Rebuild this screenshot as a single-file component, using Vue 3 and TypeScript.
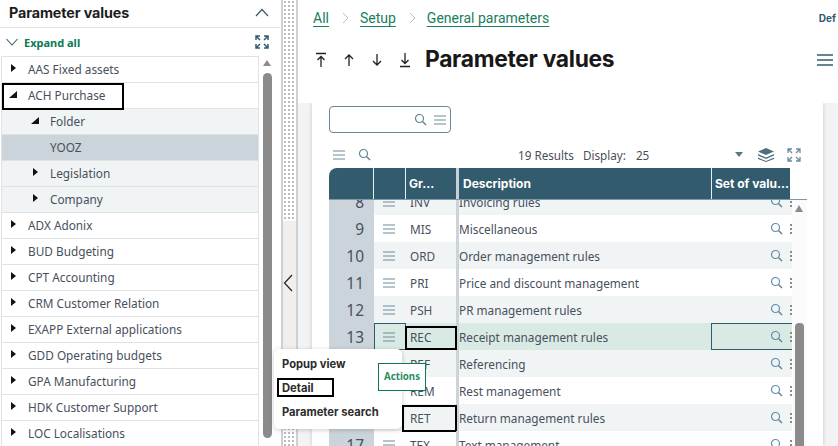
<script setup lang="ts">
const treeTop = ['AAS Fixed assets']
const treeBottom = [
  'ADX Adonix',
  'BUD Budgeting',
  'CPT Accounting',
  'CRM Customer Relation',
  'EXAPP External applications',
  'GDD Operating budgets',
  'GPA Manufacturing',
  'HDK Customer Support',
  'LOC Localisations',
]

const rows = [
  { n: 8, code: 'INV', desc: 'Invoicing rules' },
  { n: 9, code: 'MIS', desc: 'Miscellaneous' },
  { n: 10, code: 'ORD', desc: 'Order management rules' },
  { n: 11, code: 'PRI', desc: 'Price and discount management' },
  { n: 12, code: 'PSH', desc: 'PR management rules' },
  { n: 13, code: 'REC', desc: 'Receipt management rules' },
  { n: 14, code: 'REF', desc: 'Referencing' },
  { n: 15, code: 'REM', desc: 'Rest management' },
  { n: 16, code: 'RET', desc: 'Return management rules' },
  { n: 17, code: 'TEX', desc: 'Text management' },
]
</script>

<template>
  <div class="page">
    <aside class="left">
      <div class="left-title">
        <span>Parameter values</span>
        <svg width="14" height="9" viewBox="0 0 14 9"><path d="M1 8l6-6.500L13 8" fill="none" stroke="#335b6e" stroke-width="1.200" /></svg>
      </div>
      <div class="expand">
        <svg width="12" height="8" viewBox="0 0 12 8"><path d="M.5 1L6 7l5.500-6" fill="none" stroke="#335b6e" stroke-width="1.100" /></svg>
        <span>Expand all</span>
        <svg class="expand-full" width="14" height="14" viewBox="0 0 14 14"><path d="M1 5V1h4M9 1h4v4M1 9v4h4M13 9v4H9M1 1l4 4M13 1L9 5M1 13l4-4M13 13l-4-4" fill="none" stroke="#335b6e" stroke-width="1.500" /></svg>
      </div>
      <div class="tree-wrap">
        <div class="tree">
          <div v-for="t in treeTop" :key="t" class="node"><i class="closed"></i>{{ t }}</div>
          <div class="node boxed"><i class="open"></i>ACH Purchase</div>
          <div class="node sub"><i class="open"></i>Folder</div>
          <div class="node sub selected"><i class="none"></i>YOOZ</div>
          <div class="node sub"><i class="closed"></i>Legislation</div>
          <div class="node sub"><i class="closed"></i>Company</div>
          <div v-for="t in treeBottom" :key="t" class="node"><i class="closed"></i>{{ t }}</div>
        </div>
        <div class="left-scroll">
          <b class="arrow-up"></b>
          <b class="thumb"></b>
        </div>
      </div>
    </aside>

    <div class="divider">
      <div class="dots"></div>
      <div class="collapse">
        <svg width="10" height="18" viewBox="0 0 10 18"><path d="M9 1L1.500 9 9 17" fill="none" stroke="#222" stroke-width="1.200" /></svg>
      </div>
      <div class="dots"></div>
    </div>

    <main class="main">
      <header class="crumbs">
        <a>All</a>
        <svg class="gt" width="7" height="12" viewBox="0 0 7 12"><path d="M1 1l5 5-5 5" fill="none" stroke="#bdbdbd" stroke-width="1" /></svg>
        <a>Setup</a>
        <svg class="gt" width="7" height="12" viewBox="0 0 7 12"><path d="M1 1l5 5-5 5" fill="none" stroke="#bdbdbd" stroke-width="1" /></svg>
        <a>General parameters</a>
        <span class="def">Def</span>
      </header>
      <div class="heading">
        <div class="nav-icons">
          <svg width="14" height="16" viewBox="0 0 14 16"><path d="M2 1.500h10M7 15V4.500M3.500 8L7 4.500 10.500 8" fill="none" stroke="#222" stroke-width="1.300" /></svg>
          <svg width="14" height="16" viewBox="0 0 14 16"><path d="M7 14V3M3 7l4-4 4 4" fill="none" stroke="#222" stroke-width="1.300" /></svg>
          <svg width="14" height="16" viewBox="0 0 14 16"><path d="M7 2v11M3 9l4 4 4-4" fill="none" stroke="#222" stroke-width="1.300" /></svg>
          <svg width="14" height="16" viewBox="0 0 14 16"><path d="M7 1v10.500M3.500 8L7 11.500 10.500 8M2 14.500h10" fill="none" stroke="#222" stroke-width="1.300" /></svg>
        </div>
        <h1>Parameter values</h1>
        <svg class="burger-big" width="16" height="12" viewBox="0 0 16 12"><path d="M0 1h16M0 6h16M0 11h16" stroke="#335b6e" stroke-width="1.300" /></svg>
      </div>

      <section class="band">
        <div class="card">
          <div class="search-box">
            <svg width="13" height="13" viewBox="0 0 13 13"><circle cx="5.500" cy="5.500" r="4" fill="none" stroke="#5f8299" stroke-width="1.200" /><path d="M8.500 8.500L12 12" stroke="#5f8299" stroke-width="1.400" /></svg>
            <svg width="12" height="10" viewBox="0 0 12 10"><path d="M0 1h12M0 5h12M0 9h12" stroke="#6f8a9b" stroke-width="1.100" /></svg>
          </div>
          <div class="toolbar">
            <svg width="12" height="10" viewBox="0 0 12 10"><path d="M0 1h12M0 5h12M0 9h12" stroke="#6f8a9b" stroke-width="1.100" /></svg>
            <svg class="tool-search" width="13" height="13" viewBox="0 0 13 13"><circle cx="5.500" cy="5.500" r="4" fill="none" stroke="#5f8299" stroke-width="1.200" /><path d="M8.500 8.500L12 12" stroke="#5f8299" stroke-width="1.400" /></svg>
            <span class="results">19 Results</span>
            <span class="display">Display:</span>
            <span class="count">25</span>
            <i class="caret"></i>
            <svg class="layers" width="16" height="14" viewBox="0 0 16 14"><path d="M8 0l8 3.500-8 3.500-8-3.500zM0 6l8 3.500L16 6v1.500L8 11 0 7.500zM0 9.500L8 13l8-3.500V11l-8 3-8-3z" fill="#4f6f80" /></svg>
            <svg class="full" width="14" height="14" viewBox="0 0 14 14"><path d="M1 5V1h4M9 1h4v4M1 9v4h4M13 9v4H9M1 1l4 4M13 1L9 5M1 13l4-4M13 13l-4-4" fill="none" stroke="#6f8a9b" stroke-width="1.300" /></svg>
          </div>

          <div class="table">
            <div class="thead">
              <div class="th c-num"></div>
              <div class="th c-act"></div>
              <div class="th c-code">Gr...</div>
              <div class="th c-desc">Description</div>
              <div class="th c-set">Set of valu...</div>
            </div>
            <div class="tbody">
              <div class="rows">
                <div
                  v-for="(r, i) in rows"
                  :key="r.n"
                  class="row"
                  :class="{ odd: i % 2 === 0, active: r.n === 13 }"
                >
                  <div class="td c-num">{{ r.n }}</div>
                  <div class="td c-act">
                    <svg width="12" height="10" viewBox="0 0 12 10"><path d="M0 1h12M0 5h12M0 9h12" stroke="#6f8a9b" stroke-width="1.100" /></svg>
                  </div>
                  <div class="td c-code" :class="{ 'mark-rec': r.n === 13, 'mark-ret': r.n === 16 }">{{ r.code }}</div>
                  <div class="td c-desc">{{ r.desc }}</div>
                  <div class="td c-set">
                    <svg width="13" height="13" viewBox="0 0 13 13"><circle cx="5.500" cy="5.500" r="4" fill="none" stroke="#5f8fad" stroke-width="1.200" /><path d="M8.500 8.500L12 12" stroke="#5f7f93" stroke-width="1.400" /></svg>
                    <span class="kebab"></span>
                  </div>
                </div>
              </div>
              <div class="table-scroll">
                <b class="t-arrow"></b>
                <b class="t-thumb"></b>
              </div>
            </div>
          </div>
        </div>
      </section>
    </main>

    <div class="menu">
      <div class="menu-item">Popup view</div>
      <div class="menu-item detail">Detail</div>
      <div class="menu-item">Parameter search</div>
    </div>
    <div class="actions">Actions</div>
  </div>
</template>

<style scoped>
.page {
  position: relative;
  display: flex;
  width: 838px;
  height: 446px;
  overflow: hidden;
  background: #fff;
  font-family: "Noto Sans", "Open Sans", sans-serif;
  color: #3f4a55;
}

.left {
  width: 280px;
  flex: none;
  height: 446px;
  overflow: hidden;
}
.left-title {
  height: 24px;
  padding: 0 11px 3px 9px;
  display: flex;
  align-items: center;
  justify-content: space-between;
  border-bottom: 1px solid #dfe3e6;
  font: 700 14.300px "Inter", sans-serif;
  color: #1c1c1c;
  letter-spacing: -0.100px;
}
.expand {
  height: 28px;
  display: flex;
  align-items: center;
  padding: 0 11px 0 6px;
  font: 700 11px "Noto Sans", sans-serif;
  color: #0a7a50;
}
.expand span {
  margin-left: 6px;
}
.expand-full {
  margin-left: auto;
}
.tree-wrap {
  display: flex;
}
.tree {
  width: 258px;
  margin-left: 1px;
  border: 1px solid #dfe3e6;
  border-width: 1px 1px 0 1px;
  flex: none;
  box-sizing: border-box;
}
.node {
  height: 24px;
  padding-bottom: 1px;
  border-bottom: 1px solid #dfe3e6;
  display: flex;
  align-items: center;
  font-size: 11.800px;
  color: #48505c;
  padding-left: 9px;
}
.node i {
  display: block;
  width: 17px;
  flex: none;
  margin-top: -2px;
}
.node .closed::before {
  content: "";
  display: block;
  width: 0;
  height: 0;
  border-left: 5px solid #111;
  border-top: 4.500px solid transparent;
  border-bottom: 4.500px solid transparent;
}
.node .open::before {
  content: "";
  display: block;
  width: 0;
  height: 0;
  margin-left: -2px;
  border-bottom: 7px solid #111;
  border-left: 8px solid transparent;
}
.sub {
  background: #f0f4f5;
  padding-left: 31px;
}
.selected {
  background: #cbd4da;
}
.boxed {
  position: relative;
}
.boxed::after {
  content: "";
  position: absolute;
  left: 0;
  top: 0;
  width: 122px;
  height: 27px;
  box-sizing: border-box;
  border: 2px solid #000;
}
.left-scroll {
  margin-left: 4px;
  width: 9px;
}
.arrow-up {
  display: block;
  margin-top: 4px;
  width: 0;
  height: 0;
  border-left: 4.500px solid transparent;
  border-right: 4.500px solid transparent;
  border-bottom: 6px solid #8b8b8b;
}
.thumb {
  display: block;
  margin-top: 7px;
  width: 9px;
  height: 365px;
  border-radius: 5px;
  background: #8b8b8b;
}

.divider {
  width: 17px;
  flex: none;
  height: 446px;
  margin-left: 1px;
  background: #f1efee;
  border-left: 2px solid #d0d0d0;
  border-right: 2px solid #d0d0d0;
  box-sizing: border-box;
  display: flex;
  flex-direction: column;
}
.dots {
  flex: none;
  height: 221px;
  background-color: #fff;
  background-image: radial-gradient(#bcbcbc 1px, transparent 1.200px);
  background-size: 4px 4px;
}
.dots:last-child {
  height: 95px;
}
.collapse {
  flex: 1;
  display: flex;
  align-items: flex-start;
  padding-top: 53px;
}

.main {
  flex: 1;
  min-width: 0;
}
.crumbs {
  height: 36px;
  display: flex;
  align-items: center;
  padding-left: 15px;
  font: 14px "Roboto", sans-serif;
  color: #1a7d5c;
}
.crumbs a {
  text-decoration: underline;
  text-underline-offset: 3px;
}
.gt {
  margin: 0 11px 0 13px;
}
.def {
  margin-left: auto;
  margin-right: 2px;
  font: 700 10px "Inter", sans-serif;
  color: #335b6e;
}
.heading {
  height: 47px;
  display: flex;
  align-items: center;
  padding-left: 16px;
}
.nav-icons {
  display: flex;
  gap: 14px;
  width: 111px;
  flex: none;
}
h1 {
  margin: -2px 0 0;
  font: 700 22.800px "Inter", sans-serif;
  letter-spacing: -0.300px;
  color: #181818;
}
.burger-big {
  margin-left: auto;
  margin-right: 5px;
}

.band {
  height: 343px;
  margin-top: 20px;
  background: #f1f3f5;
  padding-left: 14px;
  overflow: hidden;
}
.card {
  width: 511px;
  height: 343px;
  background: #fff;
  padding: 3px 0 0 17px;
  box-shadow: 0 0 4px rgba(0, 0, 0, 0.180);
  box-sizing: border-box;
}
.search-box {
  width: 122px;
  height: 27px;
  box-sizing: border-box;
  border: 1px solid #6b8797;
  border-radius: 4px;
  display: flex;
  align-items: center;
  justify-content: flex-end;
  gap: 7px;
  padding-right: 4px;
}
.toolbar {
  margin-top: 14px;
  height: 15px;
  display: flex;
  align-items: center;
  font-size: 11.700px;
  color: #4a4f57;
  padding-left: 4px;
}
.tool-search {
  margin-left: 13px;
}
.results {
  margin-left: 147px;
}
.display {
  margin-left: 9px;
}
.count {
  margin-left: 10px;
}
.caret {
  margin-left: 86px;
  width: 0;
  height: 0;
  border-left: 4px solid transparent;
  border-right: 4px solid transparent;
  border-top: 5px solid #5d7484;
}
.layers {
  margin-left: 15px;
}
.full {
  margin-left: 13px;
}

.table {
  margin-top: 6px;
  width: 478px;
  height: 278px;
  overflow: hidden;
}
.thead {
  display: flex;
  height: 31px;
}
.th {
  background: #335b6e;
  color: #fff;
  font: 700 12px "Inter", sans-serif;
  line-height: 31px;
  box-sizing: border-box;
  border-right: 1px solid #e8eef1;
  padding-left: 3px;
  white-space: nowrap;
  overflow: hidden;
}
.th.c-num {
  border-top-left-radius: 8px;
}
.th.c-desc {
  padding-left: 4px;
}
.th.c-set {
  border-right: 0;
  padding-left: 3px;
  width: 78px;
}
.c-num {
  width: 45px;
  flex: none;
}
.c-act {
  width: 32px;
  flex: none;
}
.c-code {
  width: 53px;
  flex: none;
}
.c-desc {
  width: 253px;
  flex: none;
}
.c-set {
  width: 80px;
  flex: none;
}
.thead .c-code {
  border-right: 3px solid #c6d0d6;
}
.tbody {
  position: relative;
  border-top: 1px solid #7f99a8;
  height: 247px;
  overflow: hidden;
  background: #fbfbfb;
}
.rows {
  margin-top: -12px;
  width: 463px;
  overflow: hidden;
}
.row {
  display: flex;
  height: 27px;
  font-size: 11.800px;
  color: #48505c;
  background: #fff;
}
.row.odd {
  background: #f0f4f5;
}
.row.active {
  background: #d9eae5;
}
.td {
  display: flex;
  align-items: center;
  box-sizing: border-box;
  position: relative;
}
.td.c-num {
  background: #cbd4da;
  font-size: 15.500px;
  justify-content: flex-end;
  padding-right: 10px;
  color: #48505c;
}
.td.c-act {
  justify-content: center;
  padding-right: 2px;
}
.td.c-code {
  padding-left: 4px;
  border-right: 3px solid #cbd4da;
}
.td.c-set {
  padding-left: 58px;
  gap: 7px;
}
.kebab {
  flex: none;
  width: 2px;
  height: 10px;
  background-image: linear-gradient(#8a8a8a 50%, transparent 50%);
  background-size: 2px 4px;
}
.row.active .c-act {
  outline: 1px solid #335b6e;
  outline-offset: -1px;
}
.row.active .c-set::after {
  content: "";
  position: absolute;
  left: -1px;
  top: 0;
  right: -5px;
  bottom: 0;
  border: 1px solid #335b6e;
}
.mark-rec::after,
.mark-ret::after {
  content: "";
  position: absolute;
  box-sizing: border-box;
  border: 2px solid #000;
}
.mark-rec::after {
  left: -1px;
  right: -1px;
  top: 3px;
  bottom: 0;
}
.mark-ret::after {
  left: -4px;
  right: -1px;
  top: 1px;
  bottom: -1px;
}
.table-scroll {
  position: absolute;
  top: 0;
  right: 3px;
  width: 9px;
  height: 100%;
}
.t-arrow {
  display: block;
  margin-top: 5px;
  width: 0;
  height: 0;
  border-left: 4.500px solid transparent;
  border-right: 4.500px solid transparent;
  border-bottom: 7px solid #8b8b8b;
}
.t-thumb {
  display: block;
  margin-top: 111px;
  width: 9px;
  height: 130px;
  border-radius: 4px 4px 0 0;
  background: #8b8b8b;
}

.menu {
  position: absolute;
  left: 274px;
  top: 349px;
  width: 128px;
  height: 80px;
  background: #fff;
  border-radius: 5px;
  box-shadow: 0 1px 5px rgba(0, 0, 0, 0.200);
  padding-top: 3px;
  box-sizing: border-box;
}
.menu-item {
  height: 24px;
  padding-left: 8px;
  font: 700 11.200px/24px "Inter", sans-serif;
  color: #2c2c2c;
  position: relative;
}
.detail::after {
  content: "";
  position: absolute;
  left: 3px;
  top: 2px;
  width: 57px;
  height: 19px;
  box-sizing: border-box;
  border: 2px solid #000;
}
.actions {
  position: absolute;
  left: 378px;
  top: 363px;
  width: 48px;
  height: 28px;
  box-sizing: border-box;
  border: 1px solid #0a7a50;
  background: #fff;
  text-align: center;
  font: 700 9.700px/26px "Noto Sans", sans-serif;
  color: #2a8f63;
}
</style>
